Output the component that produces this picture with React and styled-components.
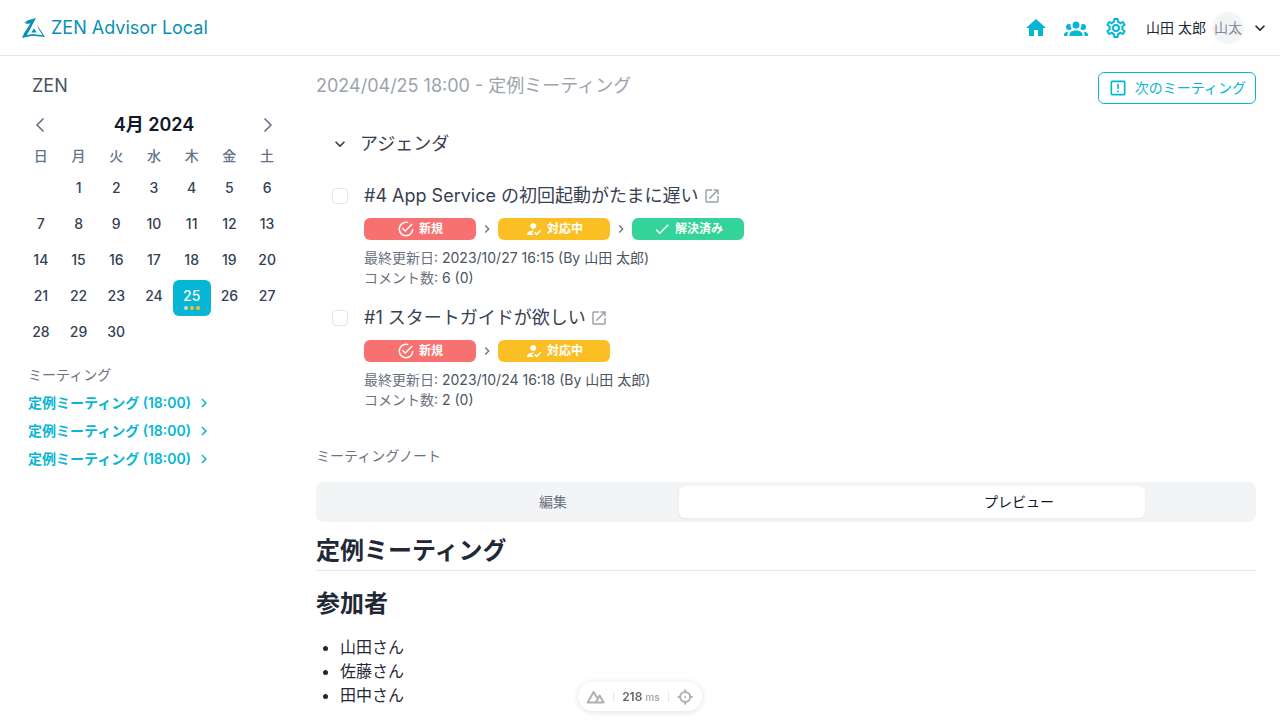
import React, { useState } from "react";
import styled, { createGlobalStyle } from "styled-components";
import { ChevronLeft, ChevronRight } from "lucide-react";
import { MdHowToReg } from "react-icons/md";

const GlobalStyle = createGlobalStyle`
  *, *::before, *::after {
    box-sizing: border-box;
  }
  body {
    margin: 0;
    background: #fff;
    color: #1f2937;
    font-family: Inter, "Noto Sans CJK JP", sans-serif;
    font-size: 14px;
    line-height: 20px;
    overflow: hidden;
  }
  button {
    padding: 0;
    border: 0;
    background: none;
    color: inherit;
    font: inherit;
    cursor: pointer;
  }
  a {
    color: inherit;
    text-decoration: none;
  }
  svg {
    display: block;
    flex-shrink: 0;
  }
`;

const icons = {
  home: "M10,20V14H14V20H19V12H22L12,3L2,12H5V20H10Z",
  group:
    "M12,5.5A3.5,3.5 0 0,1 15.5,9A3.5,3.5 0 0,1 12,12.5A3.5,3.5 0 0,1 8.5,9A3.5,3.5 0 0,1 12,5.5M5,8C5.56,8 6.08,8.15 6.53,8.42C6.38,9.85 6.8,11.27 7.66,12.38C7.16,13.34 6.16,14 5,14A3,3 0 0,1 2,11A3,3 0 0,1 5,8M19,8A3,3 0 0,1 22,11A3,3 0 0,1 19,14C17.84,14 16.84,13.34 16.34,12.38C17.2,11.27 17.62,9.85 17.47,8.42C17.92,8.15 18.44,8 19,8M5.5,18.25C5.5,16.18 8.41,14.5 12,14.5C15.59,14.5 18.5,16.18 18.5,18.25V20H5.5V18.25M0,20V18.5C0,17.11 1.89,15.94 4.45,15.6C3.86,16.28 3.5,17.22 3.5,18.25V20H0M24,20H20.5V18.25C20.5,17.22 20.14,16.28 19.55,15.6C22.11,15.94 24,17.11 24,18.5V20Z",
  cog:
    "M12,8A4,4 0 0,1 16,12A4,4 0 0,1 12,16A4,4 0 0,1 8,12A4,4 0 0,1 12,8M12,10A2,2 0 0,0 10,12A2,2 0 0,0 12,14A2,2 0 0,0 14,12A2,2 0 0,0 12,10M10,22C9.75,22 9.54,21.82 9.5,21.58L9.13,18.93C8.5,18.68 7.96,18.34 7.44,17.94L4.95,18.95C4.73,19.03 4.46,18.95 4.34,18.73L2.34,15.27C2.21,15.05 2.27,14.78 2.46,14.63L4.57,12.97L4.5,12L4.57,11L2.46,9.37C2.27,9.22 2.21,8.95 2.34,8.73L4.34,5.27C4.46,5.05 4.73,4.96 4.95,5.05L7.44,6.05C7.96,5.66 8.5,5.32 9.13,5.07L9.5,2.42C9.54,2.18 9.75,2 10,2H14C14.25,2 14.46,2.18 14.5,2.42L14.87,5.07C15.5,5.32 16.04,5.66 16.56,6.05L19.05,5.05C19.27,4.96 19.54,5.05 19.66,5.27L21.66,8.73C21.79,8.95 21.73,9.22 21.54,9.37L19.43,11L19.5,12L19.43,13L21.54,14.63C21.73,14.78 21.79,15.05 21.66,15.27L19.66,18.73C19.54,18.95 19.27,19.04 19.05,18.95L16.56,17.95C16.04,18.34 15.5,18.68 14.87,18.93L14.5,21.58C14.46,21.82 14.25,22 14,22H10M11.25,4L10.88,6.61C9.68,6.86 8.62,7.5 7.85,8.39L5.44,7.35L4.69,8.65L6.8,10.2C6.4,11.37 6.4,12.64 6.8,13.8L4.68,15.36L5.43,16.66L7.86,15.62C8.63,16.5 9.68,17.14 10.87,17.38L11.24,20H12.76L13.13,17.39C14.32,17.14 15.37,16.5 16.14,15.62L18.57,16.66L19.32,15.36L17.2,13.81C17.6,12.64 17.6,11.37 17.2,10.2L19.31,8.65L18.56,7.35L16.15,8.39C15.38,7.5 14.32,6.86 13.12,6.62L12.75,4H11.25Z",
  chevronDown: "M7.41,8.58L12,13.17L16.59,8.58L18,10L12,16L6,10L7.41,8.58Z",
  chevronRight: "M8.59,16.58L13.17,12L8.59,7.41L10,6L16,12L10,18L8.59,16.58Z",
  alertBox:
    "M19,19H5V5H19M19,3H5A2,2 0 0,0 3,5V19A2,2 0 0,0 5,21H19A2,2 0 0,0 21,19V5A2,2 0 0,0 19,3M11,15H13V17H11V15M11,7H13V13H11V7",
  openInNew:
    "M14,3V5H17.59L7.76,14.83L9.17,16.24L19,6.41V10H21V3M19,19H5V5H12V3H5C3.89,3 3,3.9 3,5V19A2,2 0 0,0 5,21H19A2,2 0 0,0 21,19V12H19V19Z",
  check: "M21,7L9,19L3.5,13.5L4.91,12.09L9,16.17L19.59,5.59L21,7Z",
  checkCircle:
    "M20,12A8,8 0 0,1 12,20A8,8 0 0,1 4,12A8,8 0 0,1 12,4C12.76,4 13.5,4.11 14.2,4.31L15.77,2.74C14.61,2.26 13.34,2 12,2A10,10 0 0,0 2,12A10,10 0 0,0 12,22A10,10 0 0,0 22,12M7.91,10.08L6.5,11.5L11,16L21,6L19.59,4.58L11,13.17L7.91,10.08Z"
};

const Icon = ({ name, size = 24 }) => (
  <svg width={size} height={size} viewBox="0 0 24 24" fill="currentColor" aria-hidden="true">
    <path d={icons[name]} />
  </svg>
);

const Header = styled.header`
  display: flex;
  align-items: center;
  justify-content: space-between;
  height: 56px;
  padding: 0 10px 0 22px;
  border-bottom: 1px solid #e5e7eb;
`;
const Brand = styled.a`
  display: flex;
  align-items: center;
  gap: 5px;
  color: #0891b2;
  font-size: 18px;
  line-height: 28px;
`;
const Nav = styled.nav`
  display: flex;
  align-items: center;
  gap: 16px;
  color: #06b6d4;
`;
const UserButton = styled.button`
  display: flex;
  align-items: center;
  gap: 6px;
  margin-left: 2px;
  color: #1f2937;
`;
const Avatar = styled.span`
  width: 32px;
  border-radius: 50%;
  background: #f3f4f6;
  color: #858b98;
  line-height: 32px;
  text-align: center;
`;
const Body = styled.div`
  display: flex;
  gap: 30px;
  padding: 16px 24px 0 22px;
`;

const Sidebar = styled.aside`
  flex: 0 0 264px;
`;
const ProjectName = styled.div`
  padding: 0 10px;
  color: #4b5563;
  font-size: 18px;
  line-height: 28px;
`;
const CalendarHeader = styled.div`
  display: flex;
  align-items: center;
  justify-content: space-between;
  margin-top: 11px;
  padding: 0 6px;
  color: #64748b;
`;
const MonthTitle = styled.button`
  color: #0f172a;
  font-size: 18px;
  font-weight: 600;
  line-height: 28px;
`;
const CalendarTable = styled.table`
  width: 100%;
  margin-top: 3px;
  border-collapse: collapse;
  table-layout: fixed;
  text-align: center;
`;
const Weekday = styled.th`
  height: 30px;
  padding: 0 0 2px;
  color: #64748b;
  font-weight: 500;
  vertical-align: middle;
`;
const DayCell = styled.td`
  height: 36px;
  padding: 0;
`;
const DayButton = styled.button`
  display: flex;
  flex-direction: column;
  align-items: center;
  width: 100%;
  height: 36px;
  padding-top: 6px;
  border-radius: 6px;
  background: ${props => (props.$selected ? "#06b6d4" : "transparent")};
  color: ${props => (props.$selected ? "#fff" : "#334155")};
  font-weight: 500;
`;
const Dots = styled.span`
  display: flex;
  gap: 2px;
`;
const Dot = styled.span`
  width: 4px;
  height: 4px;
  border-radius: 50%;
  background: ${props => props.$color};
`;
const SectionLabel = styled.div`
  color: #6b7280;
`;
const MeetingPanel = styled.section`
  margin-top: 13px;
  padding: 0 6px;
`;
const MeetingLinks = styled.ul`
  margin: 4px 0 0;
  padding: 0;
  list-style: none;
`;
const MeetingLink = styled.a`
  display: flex;
  align-items: center;
  height: 28px;
  gap: 4px;
  color: #06b6d4;
  font-weight: 600;
`;

const Main = styled.main`
  flex: 1;
  min-width: 0;
`;
const TitleBar = styled.div`
  display: flex;
  justify-content: space-between;
`;
const MeetingTitle = styled.h1`
  margin: 0;
  color: #9ca3af;
  font-size: 18px;
  font-weight: 400;
  line-height: 28px;
`;
const NextButton = styled.button`
  display: flex;
  align-items: center;
  gap: 7px;
  height: 32px;
  padding: 0 9px;
  border: 1px solid #06b6d4;
  border-radius: 6px;
  color: #06b6d4;
`;
const AgendaToggle = styled.button`
  display: flex;
  align-items: center;
  gap: 10px;
  margin-top: 24px;
  padding: 0 14px;
  color: #374151;
  font-size: 18px;
  line-height: 32px;
`;
const AgendaList = styled.div`
  display: grid;
  gap: 16px;
  margin-top: 22px;
  padding-left: 16px;
`;
const AgendaItem = styled.article`
  display: flex;
  gap: 16px;
`;
const Checkbox = styled.input`
  appearance: none;
  width: 16px;
  height: 16px;
  margin: 6px 0 0;
  border: 1px solid #e5e7eb;
  border-radius: 4px;
  background: #fff;
  &:checked {
    background: #06b6d4;
  }
`;
const AgendaTitle = styled.label`
  color: #374151;
  font-size: 18px;
  line-height: 28px;
`;
const Row = styled.div`
  display: flex;
  align-items: center;
  gap: 4px;
`;
const ExternalLink = styled.a`
  color: #9ca3af;
`;
const StatusFlow = styled.div`
  display: flex;
  align-items: center;
  gap: 3px;
  margin: 8px 0;
  color: #6b7280;
`;
const StatusBadge = styled.span`
  display: flex;
  align-items: center;
  justify-content: center;
  gap: 4px;
  width: 112px;
  height: 22px;
  border-radius: 6px;
  background: ${props => props.$color};
  color: #fff;
  font-size: 12px;
  font-weight: 600;
`;
const Meta = styled.div`
  color: #6b7280;
`;
const MetaValue = styled.span`
  color: #4b5563;
`;
const NoteLabel = styled(SectionLabel)`
  margin-top: 36px;
`;
const TabList = styled.div`
  position: relative;
  display: grid;
  grid-template-columns: 1fr 1fr;
  margin-top: 16px;
  padding: 4px;
  border-radius: 8px;
  background: #f3f4f6;
`;
const TabMarker = styled.div`
  position: absolute;
  top: 4px;
  left: 4px;
  width: calc(50% - 4px);
  height: 32px;
  border-radius: 6px;
  background: #fff;
  box-shadow: 0 1px 2px rgba(0, 0, 0, 0.05);
  transform: translateX(77%);
`;
const Tab = styled.button`
  position: relative;
  height: 32px;
  color: ${props => (props.$active ? "#111827" : "#6b7280")};
`;
const Note = styled.article`
  font-size: 16px;
  line-height: 24px;
`;
const NoteTitle = styled.h1`
  margin: 13px 0 17px;
  padding-bottom: 3px;
  border-bottom: 1px solid #e5e7eb;
  font-size: 24px;
  font-weight: 600;
  line-height: 32px;
`;
const NoteHeading = styled.h2`
  margin: 0 0 15px;
  font-size: 24px;
  font-weight: 600;
  line-height: 32px;
`;
const NoteList = styled.ul`
  margin: 0;
  padding-left: 24px;
`;

const DevBar = styled.div`
  position: fixed;
  bottom: 9px;
  left: 50%;
  display: flex;
  align-items: center;
  gap: 8px;
  height: 29px;
  padding: 0 9px 0 8px;
  border-radius: 16px;
  background: #fff;
  box-shadow: 0 1px 7px rgba(0, 0, 0, 0.12);
  color: #b0b0b0;
  font-size: 12px;
  transform: translateX(-50%);
`;
const DevDivider = styled.span`
  width: 1px;
  height: 10px;
  background: #e5e5e5;
`;
const DevTime = styled.span`
  display: flex;
  align-items: center;
  gap: 3px;
  color: #666;
  font-weight: 600;
`;
const DevUnit = styled.span`
  color: #aaa;
  font-size: 10px;
`;

const weekdays = ["日", "月", "火", "水", "木", "金", "土"];
const weeks = [0, 1, 2, 3, 4].map(week =>
  weekdays.map((_, day) => week * 7 + day)
);
const meetings = [1, 2, 3];
const members = ["山田さん", "佐藤さん", "田中さん"];

const statuses = {
  open: { label: "新規", color: "#f87171", icon: <Icon name="checkCircle" size={18} /> },
  progress: { label: "対応中", color: "#fbbf24", icon: <MdHowToReg size={18} /> },
  resolved: { label: "解決済み", color: "#34d399", icon: <Icon name="check" size={18} /> }
};

const agenda = [
  {
    id: 4,
    title: "#4 App Service の初回起動がたまに遅い",
    flow: ["open", "progress", "resolved"],
    updated: "2023/10/27 16:15 (By 山田 太郎)",
    comments: "6 (0)"
  },
  {
    id: 1,
    title: "#1 スタートガイドが欲しい",
    flow: ["open", "progress"],
    updated: "2023/10/24 16:18 (By 山田 太郎)",
    comments: "2 (0)"
  }
];

const Logo = () => (
  <svg width="24" height="22" viewBox="0 0 24 22" fill="currentColor" aria-hidden="true">
    <path d="M14 1 6 3.2 2 5.8 4.5 5.6 3.5 7 8.3 6.4 2.2 16 0 21 10 18.8 23 20 20.5 18.2 10.5 17 4.8 18 8 12.5Z" />
    <path d="M14.5 7 23 20 21 19 17.5 13.5ZM12 11.5 14.8 15.5H9.2Z" />
  </svg>
);

const Calendar = () => {
  const [selected, setSelected] = useState(25);
  return (
    <>
      <CalendarHeader>
        <button aria-label="前の月">
          <ChevronLeft size={24} strokeWidth={1.75} />
        </button>
        <MonthTitle>4月 2024</MonthTitle>
        <button aria-label="次の月">
          <ChevronRight size={24} strokeWidth={1.75} />
        </button>
      </CalendarHeader>
      <CalendarTable>
        <thead>
          <tr>
            {weekdays.map(day => (
              <Weekday key={day}>{day}</Weekday>
            ))}
          </tr>
        </thead>
        <tbody>
          {weeks.map((week, index) => (
            <tr key={index}>
              {week.map(day => (
                <DayCell key={day}>
                  {day > 0 && day < 31 && (
                    <DayButton $selected={day === selected} onClick={() => setSelected(day)}>
                      {day}
                      {day === 25 && (
                        <Dots>
                          <Dot $color="#cbd5e1" />
                          <Dot $color="#fbbf24" />
                          <Dot $color="#fbbf24" />
                        </Dots>
                      )}
                    </DayButton>
                  )}
                </DayCell>
              ))}
            </tr>
          ))}
        </tbody>
      </CalendarTable>
    </>
  );
};

const Agenda = ({ item }) => {
  const inputId = `agenda-${item.id}`;
  return (
    <AgendaItem>
      <Checkbox type="checkbox" id={inputId} />
      <div>
        <Row>
          <AgendaTitle htmlFor={inputId}>{item.title}</AgendaTitle>
          <ExternalLink href="#" aria-label="開く">
            <Icon name="openInNew" size={18} />
          </ExternalLink>
        </Row>
        <StatusFlow>
          {item.flow.map((key, index) => (
            <React.Fragment key={key}>
              {index > 0 && <Icon name="chevronRight" size={16} />}
              <StatusBadge $color={statuses[key].color}>
                {statuses[key].icon}
                {statuses[key].label}
              </StatusBadge>
            </React.Fragment>
          ))}
        </StatusFlow>
        <Meta>
          最終更新日: <MetaValue>{item.updated}</MetaValue>
        </Meta>
        <Meta>
          コメント数: <MetaValue>{item.comments}</MetaValue>
        </Meta>
      </div>
    </AgendaItem>
  );
};

const App = () => {
  const [open, setOpen] = useState(true);
  return (
    <>
      <GlobalStyle />
      <Header>
        <Brand href="#">
          <Logo />
          ZEN Advisor Local
        </Brand>
        <Nav>
          <a href="#" aria-label="ホーム">
            <Icon name="home" />
          </a>
          <a href="#" aria-label="メンバー">
            <Icon name="group" />
          </a>
          <a href="#" aria-label="設定">
            <Icon name="cog" />
          </a>
          <UserButton>
            山田 太郎
            <Avatar>山太</Avatar>
            <Icon name="chevronDown" size={20} />
          </UserButton>
        </Nav>
      </Header>
      <Body>
        <Sidebar>
          <ProjectName>ZEN</ProjectName>
          <Calendar />
          <MeetingPanel>
            <SectionLabel>ミーティング</SectionLabel>
            <MeetingLinks>
              {meetings.map(id => (
                <li key={id}>
                  <MeetingLink href="#">
                    定例ミーティング (18:00)
                    <Icon name="chevronRight" size={18} />
                  </MeetingLink>
                </li>
              ))}
            </MeetingLinks>
          </MeetingPanel>
        </Sidebar>
        <Main>
          <TitleBar>
            <MeetingTitle>2024/04/25 18:00 - 定例ミーティング</MeetingTitle>
            <NextButton>
              <Icon name="alertBox" size={20} />
              次のミーティング
            </NextButton>
          </TitleBar>
          <AgendaToggle aria-expanded={open} onClick={() => setOpen(!open)}>
            <Icon name="chevronDown" size={20} />
            アジェンダ
          </AgendaToggle>
          {open && (
            <AgendaList>
              {agenda.map(item => (
                <Agenda key={item.id} item={item} />
              ))}
            </AgendaList>
          )}
          <NoteLabel>ミーティングノート</NoteLabel>
          <TabList role="tablist">
            <TabMarker />
            <Tab role="tab">編集</Tab>
            <Tab role="tab" aria-selected="true" $active>
              プレビュー
            </Tab>
          </TabList>
          <Note>
            <NoteTitle>定例ミーティング</NoteTitle>
            <NoteHeading>参加者</NoteHeading>
            <NoteList>
              {members.map(name => (
                <li key={name}>{name}</li>
              ))}
            </NoteList>
          </Note>
        </Main>
      </Body>
      <DevBar>
        <svg width="19" height="14" viewBox="0 0 19 14" fill="none" stroke="currentColor" strokeWidth="2" strokeLinejoin="round" strokeLinecap="round">
          <path d="M10.5 12.5H17.5L13.5 5.5L9.5 12.5H1.5L7.5 2L10.5 7" />
        </svg>
        <DevDivider />
        <DevTime>
          218 <DevUnit>ms</DevUnit>
        </DevTime>
        <DevDivider />
        <svg width="16" height="16" viewBox="0 0 16 16" fill="none" stroke="currentColor" strokeWidth="2">
          <circle cx="8" cy="8" r="5" />
          <path d="M8 0.5V3M8 13V15.5M0.5 8H3M13 8H15.5" />
          <circle cx="8" cy="8" r="1" fill="currentColor" stroke="none" />
        </svg>
      </DevBar>
    </>
  );
};

export default App;
